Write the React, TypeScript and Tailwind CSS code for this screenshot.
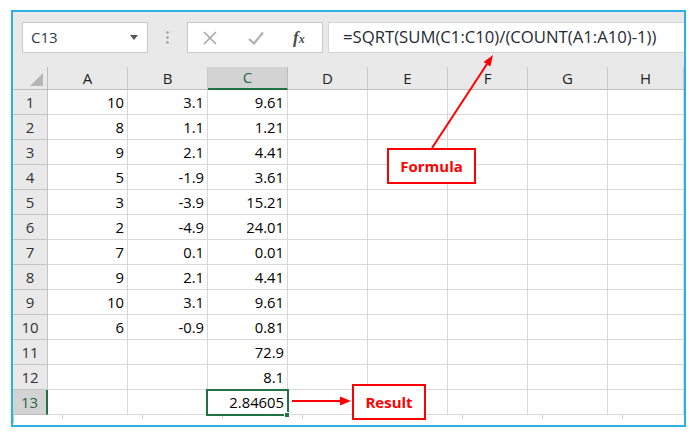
import React from "react";

const cols = ["A", "B", "C", "D", "E", "F", "G", "H"];
const data: (string | number)[][] = [
  [10, 3.1, "9.61"],
  [8, 1.1, "1.21"],
  [9, 2.1, "4.41"],
  [5, -1.9, "3.61"],
  [3, -3.9, "15.21"],
  [2, -4.9, "24.01"],
  [7, 0.1, "0.01"],
  [9, 2.1, "4.41"],
  [10, 3.1, "9.61"],
  [6, -0.9, "0.81"],
  ["", "", "72.9"],
  ["", "", "8.1"],
  ["", "", "2.84605"],
];

export default function App() {
  return (
    <div className="relative w-[695px] h-[437px] bg-white overflow-hidden font-['Open_Sans',sans-serif]">
      <div className="pt-[10px] pl-[11px]">
        <div className="w-[675px] h-[417px] border-2 border-[#2cb0e6] flex flex-col overflow-hidden">
          {/* toolbar */}
          <div className="h-[55px] shrink-0 bg-[#e9e9e9] flex items-start pt-[10px] pl-[9px]">
            <div className="w-[126px] h-[31px] bg-white border border-[#c9c9c9] flex items-center justify-between pl-[8px] pr-[9px]">
              <span className="text-[15px] text-[#303a46] leading-none">C13</span>
              <svg width="8" height="5" viewBox="0 0 8 5">
                <polygon points="0,0 8,0 4,5" fill="#555" />
              </svg>
            </div>
            <div className="w-[39px] h-[31px] flex items-center justify-center">
              <svg width="3" height="13" viewBox="0 0 3 13">
                <circle cx="1.5" cy="1.5" r="1.2" fill="#9a9a9a" />
                <circle cx="1.5" cy="6.5" r="1.2" fill="#9a9a9a" />
                <circle cx="1.5" cy="11.5" r="1.2" fill="#9a9a9a" />
              </svg>
            </div>
            <div className="w-[136px] h-[31px] bg-white border border-[#c9c9c9] flex items-center pl-[15px]">
              <svg width="14" height="14" viewBox="0 0 14 14">
                <path d="M1 1 L13 13 M13 1 L1 13" stroke="#a8a8a8" strokeWidth="1.6" />
              </svg>
              <svg className="ml-[31px]" width="16" height="14" viewBox="0 0 16 14">
                <path d="M1 8 L6 12.5 L15 1.5" stroke="#b0b0b0" strokeWidth="2.2" fill="none" />
              </svg>
              <span className="ml-[29px] font-['Liberation_Serif',serif] italic font-bold text-[#4a4a4a] text-[17px] leading-none">
                f<span className="text-[12px]">x</span>
              </span>
            </div>
            <div className="ml-[5px] flex-1 h-[31px] bg-white border border-[#d4d4d4] border-r-0 flex items-center pl-[14px]">
              <span className="text-[16.7px] text-[#1f2a36] leading-none whitespace-nowrap">
                =SQRT(SUM(C1:C10)/(COUNT(A1:A10)-1))
              </span>
            </div>
          </div>

          {/* grid */}
          <div className="grid grid-cols-[35px_repeat(7,80px)_76px]">
            <div className="h-[23px] bg-[#e9e9e9] border-r border-b border-[#bdbdbd] relative">
              <svg className="absolute left-0 top-0" width="35" height="23" viewBox="0 0 35 23">
                <polygon points="30,6 30,19 17,19" fill="#b5b5b5" />
              </svg>
            </div>
            {cols.map((c) => (
              <div
                key={c}
                className={
                  c === "C"
                    ? "h-[23px] bg-[#d3d3d3] border-r border-[#bdbdbd] border-b-2 border-b-[#217346] flex items-center justify-center text-[15px] text-[#1f6b42]"
                    : "h-[23px] bg-[#e9e9e9] border-r border-b border-[#c9c9c9] border-b-[#bdbdbd] flex items-center justify-center text-[15px] text-[#222]"
                }
              >
                {c}
              </div>
            ))}
            {data.map((row, ri) => (
              <React.Fragment key={ri}>
                <div
                  className={
                    ri === 12
                      ? "h-[25px] bg-[#d3d3d3] border-r-2 border-r-[#217346] border-b border-[#bdbdbd] flex items-center justify-center text-[15px] text-[#1f6b42]"
                      : "h-[25px] bg-[#e9e9e9] border-r border-b border-[#c4c4c4] flex items-center justify-center text-[15px] text-[#333]"
                  }
                >
                  {ri + 1}
                </div>
                {cols.map((c, ci) => (
                  <div
                    key={c}
                    className="h-[25px] border-r border-b border-[#d9d9d9] flex items-center justify-end pr-[3px] text-[14.8px] text-[#000]"
                  >
                    {ci < 3 ? String(row[ci]) : ""}
                  </div>
                ))}
              </React.Fragment>
            ))}
          </div>
          {/* partial strip */}
          <div className="flex h-[10px]">
            <div className="w-[35px] h-[8px] bg-[#e9e9e9] border-r border-[#c4c4c4]" />
            <div className="flex pl-[48px]">
              {[0, 1, 2, 3, 4, 5, 6, 7].map((i) => (
                <div key={i} className="w-[80px] h-[4px] border-l border-[#cfcfcf]" />
              ))}
            </div>
          </div>
        </div>
      </div>

      {/* selected cell */}
      <div className="absolute left-[206px] top-[389px] w-[83px] h-[27px] border-2 border-[#217346]" />
      <div className="absolute left-[284px] top-[412px] w-[6px] h-[6px] bg-[#217346] border border-white" />

      {/* arrows */}
      <svg className="absolute left-0 top-0 pointer-events-none" width="695" height="437" viewBox="0 0 695 437">
        <line x1="432" y1="148" x2="487" y2="64" stroke="#ff0000" strokeWidth="2" />
        <polygon points="493,55 490.3,66.4 483.6,62" fill="#ff0000" />
        <line x1="292" y1="401" x2="341" y2="401" stroke="#ff0000" strokeWidth="2" />
        <polygon points="351,401 340,396.5 340,405.5" fill="#ff0000" />
      </svg>

      {/* labels */}
      <div className="absolute left-[387px] top-[148px] w-[89px] h-[36px] bg-white border-2 border-[#ff0000] flex items-center justify-center">
        <span className="text-[15px] font-bold text-[#ff0000] leading-none">Formula</span>
      </div>
      <div className="absolute left-[352px] top-[384px] w-[74px] h-[36px] bg-white border-2 border-[#ff0000] flex items-center justify-center">
        <span className="text-[15px] font-bold text-[#ff0000] leading-none">Result</span>
      </div>
    </div>
  );
}
